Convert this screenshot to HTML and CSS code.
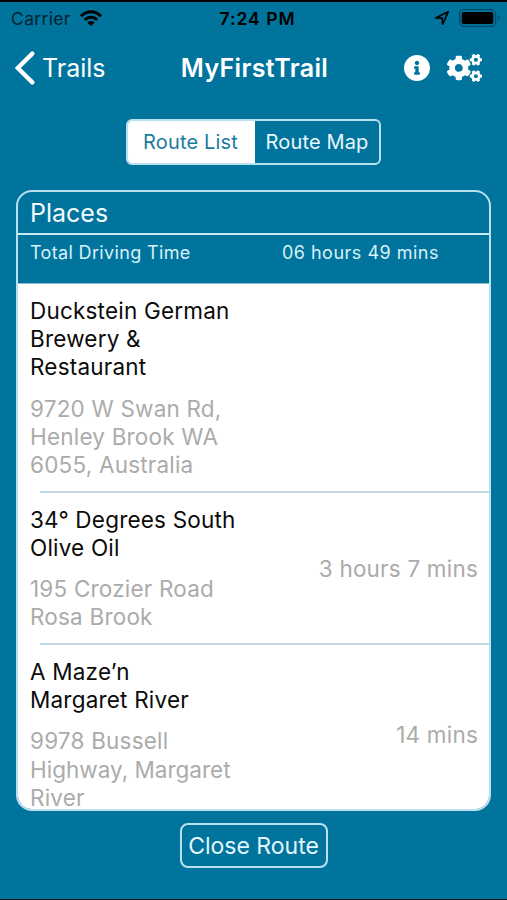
FILE: index.html
```html
<!DOCTYPE html>
<html lang="en">
<head>
<meta charset="utf-8">
<title>MyFirstTrail</title>
<link rel="stylesheet" href="styles.css">
</head>
<body>
<div class="screen">
  <header class="status">
    <div class="status-left">
      <span class="carrier">Carrier</span>
      <svg class="wifi" viewBox="0 0 22 16" width="22" height="16"><g fill="none" stroke="#000" stroke-width="2.900"><path d="M1 6.200C6.600.3 15.400.3 21 6.200"/><path d="M4.700 9.900c3.600-3.600 9-3.600 12.600 0"/></g><path d="M7.300 12.400c2.100-2 5.300-2 7.400 0L11 16z"/></svg>
    </div>
    <span class="clock">7:24 PM</span>
    <div class="status-right">
      <svg viewBox="0 0 16 16" width="16" height="16"><path d="M1.700 8 14.200 1.800 8.600 14.200 8.100 8.200z" fill="none" stroke="#000" stroke-width="1.700" stroke-linejoin="round"/></svg>
      <svg viewBox="0 0 42 18" width="42" height="18"><rect x=".7" y=".7" width="36" height="16.600" rx="4.500" fill="none" stroke="#004c68" stroke-width="1.300"/><rect x="2.700" y="3" width="31.600" height="12" rx="2"/><path d="M39 6.500c2 1 2 4 0 5z" fill="#004c68"/></svg>
    </div>
  </header>
  <nav class="nav">
    <div class="back">
      <svg viewBox="0 0 20 34" width="20" height="34"><path d="M17.300 2.600 2.800 17l14.500 14.400" fill="none" stroke="#fff" stroke-width="4.300" stroke-linecap="round"/></svg>
      <span class="back-label">Trails</span>
    </div>
    <h1 class="title">MyFirstTrail</h1>
    <div class="actions">
      <svg viewBox="8 8 496 496" width="26" height="26" fill="#fff"><path d="M256 8C119.043 8 8 119.083 8 256c0 136.997 111.043 248 248 248s248-111.003 248-248C504 119.083 392.957 8 256 8zm0 110c23.196 0 42 18.804 42 42s-18.804 42-42 42-42-18.804-42-42 18.804-42 42-42zm56 254c0 6.627-5.373 12-12 12h-88c-6.627 0-12-5.373-12-12v-24c0-6.627 5.373-12 12-12h12v-64h-12c-6.627 0-12-5.373-12-12v-24c0-6.627 5.373-12 12-12h64c6.627 0 12 5.373 12 12v100h12c6.627 0 12 5.373 12 12v24z"/></svg>
      <svg viewBox="0 0 640 512" width="35" height="28" fill="#fff">
        <path id="small-cog" d="M512.100 191l-8.200 14.300c-3 5.300-9.400 7.500-15.100 5.400-11.800-4.400-22.600-10.700-32.100-18.600-4.600-3.800-5.800-10.500-2.800-15.700l8.200-14.300c-6.900-8-12.300-17.300-15.900-27.400h-16.500c-6 0-11.200-4.300-12.200-10.300-2-12-2.100-24.600 0-37.100 1-6 6.200-10.400 12.200-10.400h16.500c3.600-10.100 9-19.400 15.900-27.400l-8.200-14.300c-3-5.200-1.900-11.900 2.800-15.700 9.500-7.900 20.400-14.200 32.100-18.600 5.700-2.100 12.100.1 15.100 5.400l8.200 14.300c10.500-1.900 21.200-1.900 31.700 0L552 6.300c3-5.300 9.400-7.500 15.100-5.400 11.800 4.400 22.600 10.700 32.100 18.600 4.600 3.800 5.800 10.500 2.800 15.700l-8.200 14.300c6.900 8 12.300 17.300 15.900 27.400h16.500c6 0 11.200 4.300 12.200 10.300 2 12 2.100 24.600 0 37.100-1 6-6.200 10.400-12.200 10.400h-16.500c-3.600 10.100-9 19.400-15.900 27.400l8.200 14.300c3 5.200 1.900 11.900-2.800 15.700-9.500 7.900-20.400 14.200-32.100 18.600-5.700 2.100-12.100-.1-15.100-5.400l-8.200-14.300c-10.400 1.900-21.200 1.900-31.700 0zm-10.500-58.800c38.500 29.600 82.400-14.300 52.800-52.800-38.500-29.700-82.400 14.300-52.800 52.800z"/>
        <use href="#small-cog" y="299"/>
        <path d="M386.300 286.100l33.700 16.800c10.100 5.800 14.500 18.100 10.500 29.100-8.900 24.200-26.400 46.400-42.600 65.800-7.400 8.900-20.200 11.100-30.300 5.300l-29.100-16.800c-16 13.700-34.600 24.600-54.900 31.700v33.600c0 11.600-8.300 21.600-19.700 23.600-24.600 4.200-50.400 4.400-75.900 0-11.500-2-20-11.900-20-23.600V418c-20.300-7.200-38.900-18-54.900-31.700L74 403c-10 5.800-22.900 3.600-30.300-5.300-16.200-19.400-33.300-41.600-42.200-65.700-4-10.900.4-23.200 10.500-29.100l33.300-16.800c-3.900-20.900-3.900-42.400 0-63.400L12 205.800c-10.100-5.800-14.600-18.100-10.500-29 8.900-24.200 26-46.400 42.200-65.800 7.400-8.900 20.200-11.100 30.300-5.300l29.100 16.800c16-13.700 34.600-24.600 54.900-31.700V57.100c0-11.500 8.200-21.500 19.600-23.500 24.600-4.200 50.500-4.400 76-.1 11.500 2 20 11.900 20 23.600v33.600c20.300 7.200 38.900 18 54.900 31.700l29.100-16.800c10-5.800 22.900-3.600 30.300 5.300 16.200 19.400 33.200 41.600 42.100 65.800 4 10.900.1 23.200-10 29.100l-33.700 16.800c3.900 21 3.900 42.500 0 63.500zm-117.600 21.100c59.200-77-28.700-164.900-105.700-105.700-59.200 77 28.700 164.900 105.700 105.700z"/>
      </svg>
    </div>
  </nav>
  <div class="tabs">
    <div class="tab tab-active"><span>Route List</span></div>
    <div class="tab"><span>Route Map</span></div>
  </div>
  <section class="card">
    <h2 class="card-title"><span>Places</span></h2>
    <div class="total">
      <span class="total-label">Total Driving Time</span>
      <span class="total-value">06 hours 49 mins</span>
    </div>
    <div class="list">
      <article class="row">
        <div class="place">
          <p class="name">Duckstein German<br>Brewery &amp;<br>Restaurant</p>
          <p class="address">9720 W Swan Rd,<br>Henley Brook WA<br>6055, Australia</p>
        </div>
      </article>
      <article class="row">
        <div class="place">
          <p class="name">34° Degrees South<br>Olive Oil</p>
          <p class="address">195 Crozier Road<br>Rosa Brook</p>
        </div>
        <span class="duration">3 hours 7 mins</span>
      </article>
      <article class="row">
        <div class="place">
          <p class="name">A Maze’n<br>Margaret River</p>
          <p class="address">9978 Bussell<br><span class="tight">Highway, Margaret</span><br>River</p>
        </div>
        <span class="duration">14 mins</span>
      </article>
    </div>
  </section>
  <button class="close">Close Route</button>
</div>
</body>
</html>
```
FILE: styles.css
```css
* { box-sizing: border-box; }
body { margin: 0; font-family: Inter, "Liberation Sans", sans-serif; }
h1, h2, p { margin: 0; font-weight: 400; }
svg { display: block; flex: none; }
.screen {
  width: 507px;
  height: 900px;
  display: flex;
  flex-direction: column;
  align-items: center;
  overflow: hidden;
  background: #00749c;
  border-top: 2px solid #000;
  border-bottom: 1px solid #001c28;
  white-space: nowrap;
}
.status {
  width: 100%;
  height: 32px;
  padding: 0 6px;
  display: grid;
  grid-template-columns: 1fr auto 1fr;
  align-items: center;
  color: #000;
  font-size: 17.500px;
}
.status-left { display: flex; align-items: center; gap: 9px; padding-left: 5px; }
.carrier { color: #002331; letter-spacing: .35px; }
.clock { position: relative; left: 4px; font-weight: 600; letter-spacing: 1px; }
.status-right { display: flex; align-items: center; justify-content: flex-end; gap: 9px; }
.nav {
  width: 100%;
  height: 68px;
  padding: 0 15px;
  display: grid;
  grid-template-columns: 1fr auto 1fr;
  align-items: center;
  color: #fff;
}
.back { display: flex; align-items: center; gap: 7px; font-size: 25px; }
.title { padding-left: 2px; font-size: 25px; font-weight: 600; letter-spacing: .35px; }
.actions { display: flex; align-items: center; justify-content: flex-end; gap: 17px; padding-right: 10px; }
.tabs {
  width: 255px;
  height: 46px;
  margin-top: 17px;
  display: flex;
  flex: none;
  border: 2px solid #b9e0ef;
  border-radius: 6px;
  overflow: hidden;
  color: #e9f7fc;
  font-size: 20px;
  letter-spacing: .15px;
}
.tab { flex: 1; display: flex; align-items: center; justify-content: center; }
.tab-active { flex: none; width: 127px; padding-right: 2px; background: #fff; color: #1a7b9f; }
.card {
  width: 475px;
  height: 621px;
  margin-top: 25px;
  flex: none;
  border: 2px solid #b9e0ef;
  border-radius: 16px;
  overflow: hidden;
}
.card-title {
  height: 43px;
  padding-left: 12px;
  display: flex;
  align-items: center;
  border-bottom: 2px solid #c9ebf6;
  color: #f3fbff;
  font-size: 25px;
}
.total {
  height: 49px;
  padding: 5px 50px 0 12px;
  display: flex;
  justify-content: space-between;
  color: #d9f1fa;
  font-size: 18px;
  line-height: 25px;
  border-bottom: 1px solid #86bbd0;
}
.total-label { letter-spacing: .35px; }
.total-value { letter-spacing: .5px; }
.list { height: 530px; background: #fff; font-size: 22.500px; line-height: 28.200px; letter-spacing: .2px; }
.row {
  padding: 13px 11px 13.500px 12px;
  display: flex;
  align-items: center;
  justify-content: space-between;
  background: linear-gradient(#c3dae6, #c3dae6) 22px 100% / 449px 2px no-repeat;
}
.name { margin-bottom: 13px; color: #0b0b0b; }
.address { color: #ababab; }
.tight { letter-spacing: 0; }
.duration { color: #ababab; }
.close {
  width: 148px;
  height: 45px;
  margin-top: 12px;
  padding: 0;
  flex: none;
  border: 2px solid #b9e0ef;
  border-radius: 8px;
  background: none;
  color: #e4f6fd;
  font: 400 23px Inter, "Liberation Sans", sans-serif;
}
```
